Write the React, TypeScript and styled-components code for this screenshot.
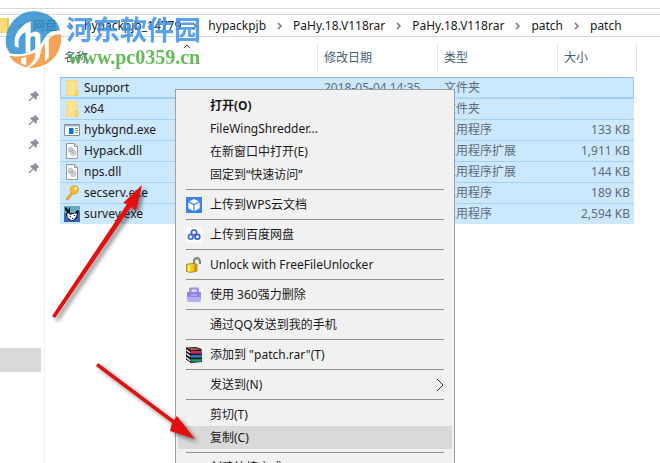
import React from 'react';
import styled, { createGlobalStyle, css } from 'styled-components';

const sans = `"Noto Sans", "Noto Sans CJK SC", sans-serif`;

const GlobalStyle = createGlobalStyle`
  * { box-sizing: border-box; }
  body { margin: 0; background: #fff; font: 12px/18px ${sans}; color: #1a1a1a; }
  button { font: inherit; color: inherit; border: 0; background: none; padding: 0; text-align: left; }
`;

const Window = styled.main`
  position: relative;
  display: flex;
  flex-direction: column;
  height: 100vh;
  overflow: hidden;
`;

const AddressArea = styled.header`
  margin-top: 8px;
  padding-top: 5px;
  border-top: 1px solid #d9d9d9;
`;

const AddressBar = styled.nav`
  display: flex;
  align-items: center;
  height: 23px;
  border-top: 1px solid #d9d9d9;
  border-bottom: 1px solid #d9d9d9;
  white-space: nowrap;
`;

const FolderStub = styled.span`
  width: 9px;
  height: 15px;
  margin-right: 9px;
  background: #fbdc79;
  border-right: 2px solid #f0c850;
`;

const Back = styled.span`
  width: 15px;
  color: #666;
`;

const Crumb = styled.a`
  color: #1a1a1a;
  text-decoration: none;
`;

const CrumbArrow = styled.svg`
  flex: none;
  width: 27px;
  height: 8px;
  fill: none;
  stroke: #777;
  stroke-width: 1.5;
`;

const Body = styled.div`
  display: flex;
  flex: 1;
  min-height: 0;
`;

const Sidebar = styled.aside`
  flex: none;
  width: 45px;
  padding-top: 47px;
  border-right: 1px solid #f1f1f1;
`;

const PinSlot = styled.div`
  display: flex;
  align-items: center;
  height: 24px;
  padding-left: 28px;
`;

const SelectedPlace = styled.div`
  height: 24px;
  margin: 168px 3px 0 0;
  background: #d9d9d9;
`;

const Content = styled.section`
  flex: 1;
  padding: 6px 0 0 15px;
`;

const FileTable = styled.table`
  width: 577px;
  table-layout: fixed;
  border-collapse: separate;
  border-spacing: 0;
`;

const HeadCell = styled.th<{ $width: number; $last?: boolean }>`
  width: ${p => p.$width}px;
  height: 29px;
  padding: 0 0 0 6px;
  text-align: left;
  font-weight: 400;
  color: #4c607a;
  border-right: ${p => (p.$last ? '0' : '1px solid #e2e2e2')};
  &:first-child { padding-left: 4px; }
`;

const HeadEdge = styled.td`
  width: 3px;
  padding: 0;
  border-right: 1px solid #e2e2e2;
`;

const HeadGap = styled.td`
  height: 5px;
  padding: 0;
`;

const FileRow = styled.tr<{ $focused?: boolean }>`
  td { border-top: 1px solid ${p => (p.$focused ? '#8cc3ea' : '#a6d1f3')}; }
  ${p => p.$focused && css`
    td { box-shadow: inset 0 -1px #b4d9f5; }
    td:first-child { box-shadow: inset 1px -1px #99cdf0; }
    td:last-child { box-shadow: inset -1px -1px #99cdf0; }
  `}
`;

const Cell = styled.td<{ $end?: boolean }>`
  height: 21px;
  padding: 0 0 0 6px;
  background: #cce8ff;
  color: #5f6b77;
  white-space: nowrap;
  ${p => p.$end && css`
    padding: 0 4px 0 0;
    text-align: right;
  `}
`;

const FileName = styled.span`
  display: flex;
  align-items: center;
  gap: 4px;
  margin-left: -2px;
  height: 18px;
  color: #1a1a1a;
  svg { flex: none; }
`;

const Menu = styled.div`
  position: absolute;
  left: 175px;
  top: 89px;
  width: 280px;
  padding: 4px 2px;
  background: #f1f1f1;
  border: 1px solid #a0a0a0;
`;

const MenuItem = styled.button<{ $active?: boolean; $default?: boolean }>`
  display: flex;
  align-items: center;
  width: 100%;
  height: 23px;
  padding: 0 8px;
  gap: 8px;
  background: ${p => (p.$active ? '#d9d9d9' : 'transparent')};
  font-weight: ${p => (p.$default ? 700 : 400)};
  white-space: nowrap;
`;

const IconSlot = styled.span`
  display: flex;
  flex: none;
  width: 16px;
  height: 16px;
`;

const Label = styled.span`
  flex: 1;
`;

const Separator = styled.hr`
  height: 1px;
  margin: 3px 8px;
  border: 0;
  background: #919191;
`;

const Overlay = styled.svg`
  position: absolute;
  left: 0;
  top: 0;
  width: 660px;
  height: 463px;
  pointer-events: none;
`;

const Arrows = styled.g`
  fill: #e60f0f;
  filter: drop-shadow(3px 3px 2px rgba(0, 0, 0, 0.45));
`;

const Watermark = styled.div`
  position: absolute;
  left: 4px;
  top: 10px;
  display: flex;
  gap: 4px;
  opacity: 0.85;
  pointer-events: none;
`;

const Brand = styled.div`
  display: flex;
  flex-direction: column;
  font: 700 27px/37px "Noto Sans CJK SC", sans-serif;
  color: #3d93ee;
  white-space: nowrap;
`;

const Site = styled.span`
  padding-left: 2px;
  font: 700 20px/20px "Liberation Serif", serif;
  color: #4bb03c;
`;

const Pin = () => (
  <svg width="12" height="12" viewBox="0 0 12 12">
    <path d="M7 .8 L11.2 5 L10 5.8 L8.9 6.6 L8.6 9.3 L7.6 9.8 L2.2 4.4 L2.7 3.4 L5.4 3.1 L6.2 2 Z" fill="#87929c" />
    <path d="M4.8 7.2 L1 11" stroke="#87929c" strokeWidth="1.3" />
  </svg>
);

const Folder = () => (
  <svg width="16" height="16" viewBox="0 0 16 16">
    <path d="M2 0 H13 V10 H14 V16 H2 Z" fill="#f0cb62" />
    <path d="M2.5 .5 H12.5 V15.5 H2.5 Z" fill="#ffe28f" />
    <path d="M11.5 10.5 H14 V15.5 H11.5 Z" fill="#fbd976" stroke="#e8bf52" strokeWidth=".6" />
  </svg>
);

const AppIcon = () => (
  <svg width="16" height="16" viewBox="0 0 16 16">
    <path d="M.5 2.5 H15.5 V13.5 H.5 Z" fill="#fff" stroke="#8493a0" />
    <path d="M1 3 H15 V4.5 H1 Z" fill="#a4b2be" />
    <path d="M5 6 H9.5 V12 H5 Z" fill="#0872d0" />
    <path d="M11 6.5 H14 M11 8.5 H14 M11 10.5 H14" stroke="#8493a0" />
  </svg>
);

const DllIcon = () => (
  <svg width="16" height="16" viewBox="0 0 16 16">
    <path d="M2.5 .5 H10.5 L13.5 3.5 V15.5 H2.5 Z" fill="#fafafa" stroke="#9a9a9a" />
    <path d="M10.5 .5 V3.5 H13.5" fill="none" stroke="#9a9a9a" />
    <g fill="none" stroke="#98a1a8" strokeWidth=".9">
      <circle cx="6.6" cy="6.8" r="2.2" />
      <circle cx="6.6" cy="6.8" r=".7" />
      <circle cx="9.2" cy="9.8" r="2.5" />
      <circle cx="9.2" cy="9.8" r=".9" />
    </g>
  </svg>
);

const KeyIcon = () => (
  <svg width="16" height="16" viewBox="0 0 16 16">
    <path d="M8.5 6 L2.2 13.2 L2.5 15 L4.6 14.8 L5 13 L6.5 12.4 L6.8 10.8 L10.5 8 Z" fill="#f6ae2b" stroke="#d98c18" strokeWidth=".6" />
    <circle cx="10.3" cy="4.8" r="4.1" fill="#f9b934" stroke="#dd921b" strokeWidth=".6" />
    <circle cx="11.6" cy="3.6" r="1.3" fill="#fff" />
  </svg>
);

const SurveyIcon = () => (
  <svg width="16" height="16" viewBox="0 0 16 16">
    <path d="M0 0 H16 V16 H0 Z" fill="#3468b8" />
    <path d="M0 0 H16 V5 L11 7 H0 Z" fill="#5fabb6" />
    <path d="M1 1 L3 2 L4 4 L6 1 V7 H11 L12 5 L15 4 L14 8 L13 12 L9 15 L5 14 L2 9 L3 6 L1 4 Z" fill="#0b1220" />
    <path d="M3 8 L5 7 L6 9 L8 8 H10 L11 7 L13 8 L12 11 L9 14 H7 L4 12 Z" fill="#fff" />
    <path d="M6 10 h1 v1 h-1 z M10 9 h1 v1 h-1 z M8 12 h1 v1 h-1 z" fill="#0b1220" />
  </svg>
);

const WpsIcon = () => (
  <svg width="16" height="16" viewBox="0 0 16 16">
    <path d="M0 0 H16 V16 H0 Z" fill="#3c82f0" />
    <path d="M8 2 L13 4.4 L8 6.9 L3 4.4 Z M2.3 5.6 L7.4 8.1 V13.9 L2.3 11.2 Z M13.7 5.6 L8.6 8.1 V13.9 L13.7 11.2 Z" fill="#fff" />
  </svg>
);

const BaiduIcon = () => (
  <svg width="16" height="16" viewBox="0 0 16 16">
    <path d="M0 0 H16 V16 H0 Z" fill="#fafafa" />
    <g fill="none" strokeWidth="1.7">
      <circle cx="8" cy="5.6" r="2.6" stroke="#2b65e3" />
      <circle cx="4.8" cy="9.8" r="2.4" stroke="#3478ee" />
      <circle cx="11.4" cy="9.8" r="2.4" stroke="#2b65e3" />
    </g>
    <circle cx="6.8" cy="8.4" r="1.2" fill="#e2445a" />
  </svg>
);

const UnlockIcon = () => (
  <svg width="16" height="16" viewBox="0 0 16 16">
    <path d="M8 7 V4 Q8 1.2 11 1.2 Q14.3 1.5 14 7" fill="none" stroke="#858585" strokeWidth="2.2" />
    <path d="M.5 7.5 Q5 5.5 11 7 V14 Q5 16.5 .5 14.5 Z" fill="#f0c419" stroke="#a8830c" strokeWidth=".8" />
    <path d="M2 8 H4.5 V14.5 H2 Z" fill="#fff06e" />
    <path d="M8.5 7.5 H10.5 V14 L8.5 14.7 Z" fill="#b8900f" />
  </svg>
);

const CrushIcon = () => (
  <svg width="16" height="16" viewBox="0 0 16 16">
    <path d="M4 .5 H12 L13 1.5 V6 H3 V1.5 Z" fill="#9c92e4" />
    <path d="M5.5 2.5 H10.5 V6 H5.5 Z" fill="#ddd8f8" />
    <rect x="1" y="5" width="14" height="6" rx="1" fill="#8f83e0" />
    <path d="M1 10 H15 V13 Q15 15 13 15 H3 Q1 15 1 13 Z" fill="#b5b0f6" />
    <path d="M5 8 H11" stroke="#c9c2f6" />
  </svg>
);

const RarIcon = () => (
  <svg width="16" height="16" viewBox="0 0 16 16">
    <path d="M0 .5 L10 0 L15.5 2 L16 15 L5 16 L0 12.5 Z" fill="#1d1718" />
    <path d="M1.5 1.3 L10 .8 L14 2.6 L5.5 3.4 Z" fill="#a85a36" />
    <path d="M5 4 H15.5 V6.7 H5 Z" fill="#c2266e" />
    <path d="M5 8 H15.5 V10.7 H5 Z" fill="#2b78be" />
    <path d="M5 12.2 H15.5 V14.7 H5 Z" fill="#17a273" />
    <path d="M.3 3 L4.2 5.8 M.3 6.5 L4.2 9.5 M.3 10.5 L4.2 13.8" stroke="#fff" strokeWidth="1.3" />
  </svg>
);

const Emblem = () => (
  <svg width="58" height="58" viewBox="12 16 174 180">
    <path d="M16 130 C6 72 48 20 100 20 C146 20 178 50 183 80 C160 76 142 88 132 108 C112 142 70 160 27 150 Z" fill="#2e8fd0" />
    <path d="M42 108 C44 88 66 58 92 52 V88 Q112 76 122 92 V132 L106 142 V100 Q98 94 91 102 V148 H76 V86 C64 88 58 98 54 112 L54 134 L42 128 Z" fill="#fff" />
    <path d="M186 92 C192 150 150 198 84 196 C116 182 122 160 124 140 C140 112 156 88 186 92 Z" fill="#f59338" />
    <path d="M25 158 C56 164 82 158 106 148 C108 166 98 182 80 194 C54 188 36 176 25 158 Z" fill="#f59338" />
    <path d="M62 166 L78 162 V188 L62 182 Z M136 116 L148 102 V164 L136 176 Z" fill="#fff" />
  </svg>
);

const files = [
  { name: 'Support', type: '文件夹', size: '', date: '2018-05-04 14:35', Icon: Folder },
  { name: 'x64', type: '文件夹', size: '', date: '', Icon: Folder },
  { name: 'hybkgnd.exe', type: '应用程序', size: '133 KB', date: '', Icon: AppIcon },
  { name: 'Hypack.dll', type: '应用程序扩展', size: '1,911 KB', date: '', Icon: DllIcon },
  { name: 'nps.dll', type: '应用程序扩展', size: '144 KB', date: '', Icon: DllIcon },
  { name: 'secserv.exe', type: '应用程序', size: '189 KB', date: '', Icon: KeyIcon },
  { name: 'survey.exe', type: '应用程序', size: '2,594 KB', date: '', Icon: SurveyIcon },
];

const crumbs = ['网盘', 'hypackpjb_14779', 'hypackpjb', 'PaHy.18.V118rar', 'PaHy.18.V118rar', 'patch', 'patch'];

type Entry = { label: string; Icon?: React.FC; bold?: boolean; active?: boolean; submenu?: boolean };

const menuGroups: Entry[][] = [
  [
    { label: '打开(O)', bold: true },
    { label: 'FileWingShredder...' },
    { label: '在新窗口中打开(E)' },
    { label: '固定到“快速访问”' },
  ],
  [{ label: '上传到WPS云文档', Icon: WpsIcon }],
  [{ label: '上传到百度网盘', Icon: BaiduIcon }],
  [{ label: 'Unlock with FreeFileUnlocker', Icon: UnlockIcon }],
  [{ label: '使用 360强力删除', Icon: CrushIcon }],
  [{ label: '通过QQ发送到我的手机' }],
  [{ label: '添加到 "patch.rar"(T)', Icon: RarIcon }],
  [{ label: '发送到(N)', submenu: true }],
  [{ label: '剪切(T)' }, { label: '复制(C)', active: true }],
  [{ label: '创建快捷方式(S)' }],
];

export default function App() {
  return (
    <Window>
      <GlobalStyle />
      <AddressArea>
        <AddressBar>
          <FolderStub />
          <Back>«</Back>
          {crumbs.map((name, i) => (
            <React.Fragment key={i}>
              {i > 0 && (
                <CrumbArrow viewBox="0 0 27 8">
                  <path d="M12 1 L15 4 L12 7" />
                </CrumbArrow>
              )}
              <Crumb href="#">{name}</Crumb>
            </React.Fragment>
          ))}
        </AddressBar>
      </AddressArea>
      <Body>
        <Sidebar>
          {[0, 1, 2, 3].map(i => (
            <PinSlot key={i}><Pin /></PinSlot>
          ))}
          <SelectedPlace />
        </Sidebar>
        <Content>
          <FileTable>
            <thead>
              <tr>
                <HeadCell $width={258}>名称</HeadCell>
                <HeadCell $width={120}>修改日期</HeadCell>
                <HeadCell $width={120}>类型</HeadCell>
                <HeadCell $width={76} $last>大小</HeadCell>
                <HeadEdge />
              </tr>
            </thead>
            <tbody>
              <tr><HeadGap colSpan={5} /></tr>
              {files.map(({ name, date, type, size, Icon }, i) => (
                <FileRow key={name} $focused={i === 0}>
                  <Cell><FileName><Icon />{name}</FileName></Cell>
                  <Cell>{date}</Cell>
                  <Cell>{type}</Cell>
                  <Cell $end>{size}</Cell>
                </FileRow>
              ))}
            </tbody>
          </FileTable>
        </Content>
      </Body>
      <Menu role="menu">
        {menuGroups.map((group, g) => (
          <React.Fragment key={g}>
            {g > 0 && <Separator />}
            {group.map(({ label, Icon, bold, active, submenu }) => (
              <MenuItem key={label} role="menuitem" $default={bold} $active={active}>
                <IconSlot>{Icon && <Icon />}</IconSlot>
                <Label>{label}</Label>
                {submenu && (
                  <svg width="8" height="14" viewBox="0 0 8 14" fill="none" stroke="#333">
                    <path d="M1 1 L7 7 L1 13" />
                  </svg>
                )}
              </MenuItem>
            ))}
          </React.Fragment>
        ))}
      </Menu>
      <Overlay viewBox="0 0 660 463">
        <path d="M184 48 L187 45 L190 48" fill="none" stroke="#555" />
        <Arrows>
          <path d="M52 316 L127 204 L123 203 L142 185 L136 211 L131 207 L55 318 Z" />
          <path d="M98 363 L174 420 L177 416 L195 439 L170 431 L172 423 L96 366 Z" />
        </Arrows>
      </Overlay>
      <Watermark>
        <Emblem />
        <Brand>
          河东软件园
          <Site>www.pc0359.cn</Site>
        </Brand>
      </Watermark>
    </Window>
  );
}
